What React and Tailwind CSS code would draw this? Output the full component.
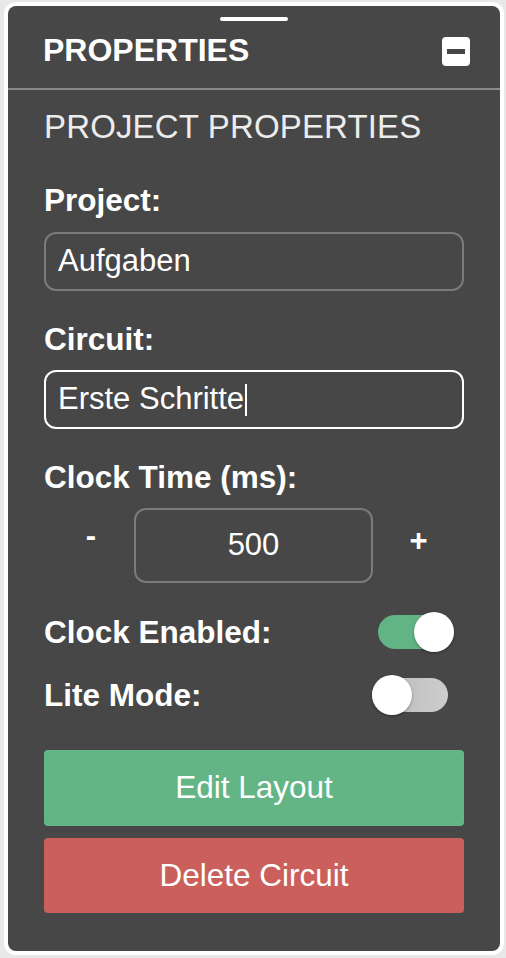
import React from "react";

const font = { fontFamily: '"Liberation Sans", Arial, Helvetica, sans-serif' };

function Toggle({ on, className }) {
  return (
    <div className={"relative h-[40px] w-[76px] flex items-center " + className}>
      <div
        className={
          "h-[34px] w-full rounded-full " +
          (on ? "bg-[#62b484]" : "bg-gradient-to-r from-[#b9b9b9] to-[#cdcdcd]")
        }
      />
      <div
        className={
          "absolute top-0 h-[40px] w-[40px] rounded-full bg-white shadow-[0_1px_3px_rgba(0,0,0,0.35)] " +
          (on ? "right-0" : "left-0")
        }
      />
    </div>
  );
}

export default function App() {
  return (
    <div className="min-h-[958px] w-[506px] bg-[#e8e8e8] pl-[4px] pt-[2px]" style={font}>
      <div className="w-[500px] rounded-[12px] bg-white p-[4px]">
        <div className="flex h-[945px] flex-col rounded-[8px] bg-[#474747] text-white">
          {/* drag handle */}
          <div className="flex justify-center pt-[11px]">
            <div className="h-[4px] w-[68px] rounded-full bg-white" />
          </div>
          {/* header */}
          <div className="mt-[8px] flex h-[42px] items-center justify-between pl-[35px] pr-[30px]">
            <div className="text-[32px] font-bold leading-[42px]">PROPERTIES</div>
            <div className="mt-[2px] flex h-[29px] w-[28px] items-center justify-center rounded-[4px] bg-white">
              <div className="h-[5px] w-[18px] bg-[#474747]" />
            </div>
          </div>
          <div className="mt-[17px] h-[2px] bg-[#8a8a8a]" />

          <div className="flex flex-col px-[36px]">
            <div className="mt-[17px] text-[33px] font-normal leading-[40px] tracking-[0.15px] text-[#ececec]">
              PROJECT PROPERTIES
            </div>

            <div className="mt-[35px] text-[31.5px] font-bold leading-[36px]">Project:</div>
            <div className="mt-[14px] flex h-[59px] items-center rounded-[12px] border-2 border-[#7b7b7b] pl-[12px] text-[31px]">
              Aufgaben
            </div>

            <div className="mt-[30px] text-[31.5px] font-bold leading-[36px]">Circuit:</div>
            <div className="mt-[13px] flex h-[59px] items-center rounded-[12px] border-2 border-white pl-[12px] text-[31px]">
              <span>Erste Schritte</span>
              <span className="ml-[1px] h-[32px] w-[2px] bg-white" />
            </div>

            <div className="mt-[30px] text-[31.5px] font-bold leading-[36px]">Clock Time (ms):</div>
            <div className="mt-[13px] flex h-[75px] items-center">
              <div className="flex w-[90px] justify-center pb-[20px] pl-[4px] text-[31px] font-bold leading-[36px]">
                -
              </div>
              <div className="flex h-[75px] w-[239px] items-center justify-center rounded-[12px] border-2 border-[#7b7b7b] text-[31px]">
                500
              </div>
              <div className="flex flex-1 justify-center pb-[10px] text-[31px] font-bold leading-[36px]">
                +
              </div>
            </div>

            <div className="mt-[29px] flex h-[40px] items-center">
              <div className="text-[31.5px] font-bold leading-[36px]">Clock Enabled:</div>
              <Toggle on className="ml-auto mr-[10px]" />
            </div>
            <div className="mt-[23px] flex h-[40px] items-center">
              <div className="text-[31.5px] font-bold leading-[36px]">Lite Mode:</div>
              <Toggle on={false} className="ml-auto mr-[16px]" />
            </div>

            <button className="mt-[35px] flex h-[76px] w-full items-center justify-center rounded-[4px] bg-[#63b586] text-[31.5px] text-white">
              Edit Layout
            </button>
            <button className="mt-[12px] flex h-[75px] w-full items-center justify-center rounded-[4px] bg-[#ca5f5c] text-[31.5px] text-white">
              Delete Circuit
            </button>
          </div>
        </div>
      </div>
    </div>
  );
}
